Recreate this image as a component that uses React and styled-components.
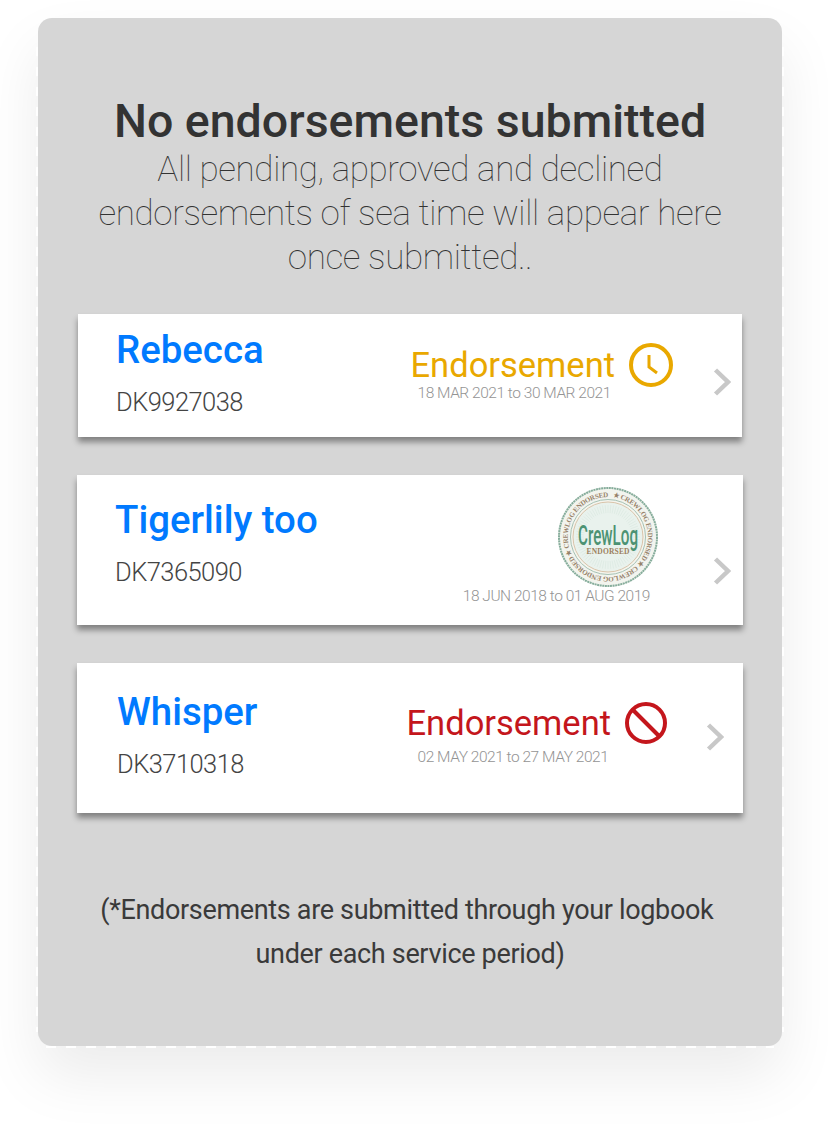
import React from "react";
import styled, { createGlobalStyle } from "styled-components";

const GlobalStyle = createGlobalStyle`
  html, body {
    margin: 0;
    padding: 0;
    background: #fff;
    font-family: Roboto, "Liberation Sans", sans-serif;
  }
`;

const ClockIcon = ({ color }) => (
  <svg width="44" height="44" viewBox="0 0 44 44" fill="none" stroke={color} strokeWidth="4">
    <circle cx="22" cy="22" r="20" />
    <path d="M20 12 V24 L28 30" strokeWidth="3" />
  </svg>
);

const BlockedIcon = ({ color }) => (
  <svg width="42" height="42" viewBox="0 0 42 42" fill="none" stroke={color} strokeWidth="4">
    <circle cx="21" cy="21" r="19" />
    <path d="M7.5 7.5 L34.5 34.5" />
  </svg>
);

const Chevron = () => (
  <svg width="18" height="28" viewBox="0 0 18 28" fill="none" stroke="#c8c8c8" strokeWidth="4.5">
    <path d="M2.5 2 L15 14 L2.5 26" />
  </svg>
);

const sealRays = Array.from({ length: 72 }, (_, i) => i * 5);

const Seal = () => (
  <svg width="102" height="102" viewBox="0 0 102 102">
    <defs>
      <path id="sealRing" d="M55.87 11.3 A40 40 0 1 1 55.18 11.22" />
    </defs>
    <circle cx="51" cy="51" r="50" fill="#f2f4ee" />
    <circle cx="51" cy="51" r="49" fill="none" stroke="#86ad9c" strokeWidth="2" strokeDasharray="2 0.6" />
    <circle cx="51" cy="51" r="37.5" fill="#f5f5ee" stroke="#a6c2b5" strokeWidth="1" />
    <circle cx="51" cy="51" r="35" fill="#e9f2ed" stroke="#d9c4aa" strokeWidth="1" />
    <g stroke="#d6e6dd" strokeWidth="0.5">
      {sealRays.map(angle => (
        <line key={angle} x1="51" y1="19" x2="51" y2="27" transform={`rotate(${angle} 51 51)`} />
      ))}
    </g>
    <text fontFamily="Liberation Serif, serif" fontWeight="700" fontSize="7" fill="#97826a">
      <textPath href="#sealRing" textLength="246">
        ★ CREWLOG ENDORSED ★ CREWLOG ENDORSED ★ CREWLOG ENDORSED
      </textPath>
    </text>
    <text x="51" y="59" textAnchor="middle" fontFamily="Roboto, sans-serif" fontWeight="500" fontSize="27" textLength="60" lengthAdjust="spacingAndGlyphs" fill="#4c9273">CrewLog</text>
    <text x="51" y="68" textAnchor="middle" fontFamily="Liberation Serif, serif" fontWeight="700" fontSize="7.5" textLength="43" fill="#9c7f5e">ENDORSED</text>
  </svg>
);

const records = [
  {
    name: "Rebecca",
    code: "DK9927038",
    range: "18 MAR 2021 to 30 MAR 2021",
    status: "pending",
    color: "#e9a800",
  },
  {
    name: "Tigerlily too",
    code: "DK7365090",
    range: "18 JUN 2018 to 01 AUG 2019",
    status: "approved",
  },
  {
    name: "Whisper",
    code: "DK3710318",
    range: "02 MAY 2021 to 27 MAY 2021",
    status: "declined",
    color: "#c4161c",
  },
];

const layouts = {
  pending: { inset: 1, height: 123, infoLeft: 38, infoTop: 11, statusTop: 29, statusRight: 69, dateGap: -4, dateLeft: 7, arrowTop: 54, arrowRight: 11 },
  approved: { inset: 0, height: 150, infoLeft: 38, infoTop: 20, statusTop: 11, statusRight: 84, arrowTop: 82, arrowRight: 12 },
  declined: { inset: 0, height: 150, infoLeft: 40, infoTop: 24, statusTop: 38, statusRight: 76, dateGap: 2, dateLeft: 11, arrowTop: 60, arrowRight: 19 },
};

const RecordCard = ({ record }) => {
  const layout = layouts[record.status];
  return (
    <Card $inset={layout.inset} $height={layout.height}>
      <Info $left={layout.infoLeft} $top={layout.infoTop}>
        <Name>{record.name}</Name>
        <Code>{record.code}</Code>
      </Info>
      {record.status === "approved" ? (
        <StampBlock $top={layout.statusTop} $right={layout.statusRight}>
          <Seal />
          <StampDate>{record.range}</StampDate>
        </StampBlock>
      ) : (
        <StatusBlock $top={layout.statusTop} $right={layout.statusRight}>
          <StatusRow>
            <StatusLabel $color={record.color}>Endorsement</StatusLabel>
            {record.status === "pending" ? (
              <ClockIcon color={record.color} />
            ) : (
              <BlockedIcon color={record.color} />
            )}
          </StatusRow>
          <DateRange $gap={layout.dateGap} $left={layout.dateLeft}>{record.range}</DateRange>
        </StatusBlock>
      )}
      <Arrow $top={layout.arrowTop} $right={layout.arrowRight}>
        <Chevron />
      </Arrow>
    </Card>
  );
};

export default function App() {
  return (
    <Page>
      <GlobalStyle />
      <Panel>
        <Title>No endorsements submitted</Title>
        <Subtitle>
          All pending, approved and declined
          <br />
          endorsements of sea time will appear here
          <br />
          once submitted..
        </Subtitle>
        <CardList>
          {records.map(record => (
            <RecordCard key={record.code} record={record} />
          ))}
        </CardList>
        <Footnote>
          (*Endorsements are submitted through your logbook&nbsp;
          <br />
          under each service period)
        </Footnote>
      </Panel>
    </Page>
  );
}

const Page = styled.div`
  width: 828px;
  height: 1128px;
  padding: 18px 46px 0 38px;
  box-sizing: border-box;
  overflow: hidden;
`;

const Panel = styled.div`
  position: relative;
  width: 744px;
  height: 1028px;
  box-sizing: border-box;
  padding-top: 76px;
  background: #d6d6d6;
  border-radius: 14px;
  box-shadow: 0 30px 60px rgba(0, 0, 0, 0.08);
  color: #333;
  text-align: center;

  /* white dashes sit just outside the grey, along the sides and the bottom */
  &::before {
    content: "";
    position: absolute;
    top: 29px;
    bottom: 14px;
    left: -2px;
    right: -2px;
    background:
      repeating-linear-gradient(to bottom, #fff 0 9px, transparent 9px 20px) left / 2px 100% no-repeat,
      repeating-linear-gradient(to bottom, #fff 0 9px, transparent 9px 20px) right / 2px 100% no-repeat;
  }

  &::after {
    content: "";
    position: absolute;
    left: 8px;
    right: 8px;
    bottom: -2px;
    height: 2px;
    background: repeating-linear-gradient(to right, #fff 0 10px, transparent 10px 20px);
  }
`;

const Title = styled.h1`
  margin: 0;
  font-size: 46.5px;
  line-height: 54px;
  font-weight: 500;
  color: #333;
`;

const Subtitle = styled.p`
  margin: 0;
  font-size: 35px;
  line-height: 44px;
  font-weight: 100;
  letter-spacing: -0.38px;
  color: #333;
`;

const CardList = styled.div`
  display: flex;
  flex-direction: column;
  margin-top: 34px;
  gap: 38px;
`;

const Card = styled.div`
  position: relative;
  display: flex;
  align-items: flex-start;
  height: ${p => p.$height}px;
  margin: 0 ${p => 39 + p.$inset}px 0 ${p => 39 + p.$inset}px;
  background: #fff;
  text-align: left;
  box-shadow: 0 5px 6px rgba(0, 0, 0, 0.4);
`;

const Info = styled.div`
  display: flex;
  flex-direction: column;
  padding: ${p => p.$top}px 0 0 ${p => p.$left}px;
`;

const Name = styled.div`
  font-size: 38.4px;
  line-height: 50px;
  font-weight: 500;
  color: #007aff;
`;

const Code = styled.div`
  margin-top: 9px;
  font-size: 25.5px;
  line-height: 36px;
  font-weight: 300;
  letter-spacing: -0.55px;
  color: #444;
`;

const StatusBlock = styled.div`
  margin: ${p => p.$top}px ${p => p.$right}px 0 auto;
  display: flex;
  flex-direction: column;
`;

const StatusRow = styled.div`
  display: flex;
  align-items: center;
  gap: 14px;
`;

const StatusLabel = styled.span`
  font-size: 34.5px;
  line-height: 44px;
  color: ${p => p.$color};
`;

const DateRange = styled.div`
  margin-top: ${p => p.$gap}px;
  padding-left: ${p => p.$left}px;
  font-size: 15.5px;
  line-height: 20px;
  font-weight: 300;
  letter-spacing: -0.47px;
  color: #949494;
  white-space: nowrap;
`;

const StampBlock = styled.div`
  margin: ${p => p.$top}px ${p => p.$right}px 0 auto;
  display: flex;
  flex-direction: column;
  align-items: flex-end;
`;

const StampDate = styled.div`
  margin-top: -2px;
  margin-right: 9px;
  font-size: 15.5px;
  line-height: 20px;
  font-weight: 300;
  letter-spacing: -0.47px;
  color: #949494;
  white-space: nowrap;
`;

const Arrow = styled.div`
  position: absolute;
  top: ${p => p.$top}px;
  right: ${p => p.$right}px;
  display: flex;
`;

const Footnote = styled.p`
  margin: 75px 0 0;
  font-size: 27px;
  line-height: 44px;
  font-weight: 400;
  letter-spacing: -0.33px;
  color: #3a3a3a;
`;
